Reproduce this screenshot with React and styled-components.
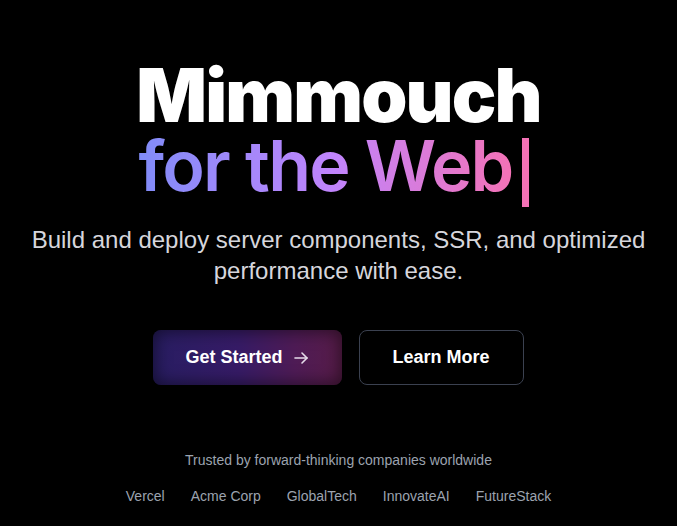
import React from "react";
import styled, { createGlobalStyle } from "styled-components";

const Global = createGlobalStyle`
  html, body {
    margin: 0;
    padding: 0;
    background: #000;
  }
  body {
    font-family: "Liberation Sans", Arial, sans-serif;
  }
`;

const Hero = styled.section`
  min-height: 526px;
  background: #000;
  display: flex;
  flex-direction: column;
  align-items: center;
  padding-top: 57px;
  box-sizing: border-box;
`;

const Title = styled.h1`
  margin: 0;
  display: flex;
  flex-direction: column;
  align-items: center;
  font-family: Inter, "Liberation Sans", sans-serif;
  font-weight: normal;
  white-space: nowrap;
`;

const TitleTop = styled.span`
  font-weight: 900;
  font-size: 74px;
  line-height: 76px;
  letter-spacing: -1.85px;
  color: #fff;
`;

const TitleBottom = styled.span`
  font-weight: 600;
  font-size: 70px;
  line-height: 66px;
  letter-spacing: -1.75px;
`;

const Gradient = styled.span`
  background: linear-gradient(90deg, #818cf8 0%, #c084fc 52%, #f472b6 100%);
  -webkit-background-clip: text;
  background-clip: text;
  color: transparent;
`;

const Caret = styled.span`
  display: inline-block;
  width: 7px;
  height: 69px;
  margin: 0 10px -16px 9px;
  vertical-align: baseline;
  background: #f472b6;
`;

const Subtitle = styled.p`
  margin: 25px 0 0;
  max-width: 640px;
  text-align: center;
  font-family: "Liberation Sans", Arial, sans-serif;
  font-size: 24px;
  line-height: 31px;
  color: #d6d6dc;
`;

const Actions = styled.div`
  display: flex;
  gap: 17px;
  margin-top: 44px;
`;

const Button = styled.button`
  height: 55px;
  padding: 0 ${(p) => (p.$primary ? "34px 0 32px" : "33px")};
  border-radius: 8px;
  display: flex;
  align-items: center;
  gap: 11px;
  font-family: "Liberation Sans", Arial, sans-serif;
  font-weight: 700;
  font-size: 18px;
  color: #fff;
  cursor: pointer;
  border: ${(p) => (p.$primary ? "none" : "1px solid #3b4150")};
  background: ${(p) =>
    p.$primary
      ? "linear-gradient(90deg, #281d62 0%, #361b66 45%, #4e1b55 75%, #571c48 100%)"
      : "#000"};
  box-shadow: ${(p) =>
    p.$primary ? "inset 0 0 16px 2px rgba(0, 0, 0, 0.5)" : "none"};
`;

const Arrow = () => (
  <svg width="14" height="12" viewBox="0 0 14 12" fill="none" stroke="#e6dcea" strokeWidth="1.6" strokeLinecap="round" strokeLinejoin="round">
    <path d="M1 6h12" />
    <path d="M8 1l5 5-5 5" />
  </svg>
);

const Trusted = styled.p`
  margin: 65px 0 0;
  font-family: "Liberation Sans", Arial, sans-serif;
  font-size: 14px;
  line-height: 20px;
  color: #9ca3af;
`;

const Logos = styled.div`
  display: flex;
  gap: 26px;
  margin-top: 16px;
  font-family: "Liberation Sans", Arial, sans-serif;
  font-size: 14px;
  line-height: 20px;
  color: #9ca3af;
`;

const companies = ["Vercel", "Acme Corp", "GlobalTech", "InnovateAI", "FutureStack"];

export default function App() {
  return (
    <>
      <Global />
      <Hero>
        <Title>
          <TitleTop>Mimmouch</TitleTop>
          <TitleBottom>
            <Gradient>for the Web</Gradient>
            <Caret />
          </TitleBottom>
        </Title>
        <Subtitle>
          Build and deploy server components, SSR, and optimized performance with ease.
        </Subtitle>
        <Actions>
          <Button $primary>
            Get Started <Arrow />
          </Button>
          <Button>Learn More</Button>
        </Actions>
        <Trusted>Trusted by forward-thinking companies worldwide</Trusted>
        <Logos>
          {companies.map((c) => (
            <span key={c}>{c}</span>
          ))}
        </Logos>
      </Hero>
    </>
  );
}
